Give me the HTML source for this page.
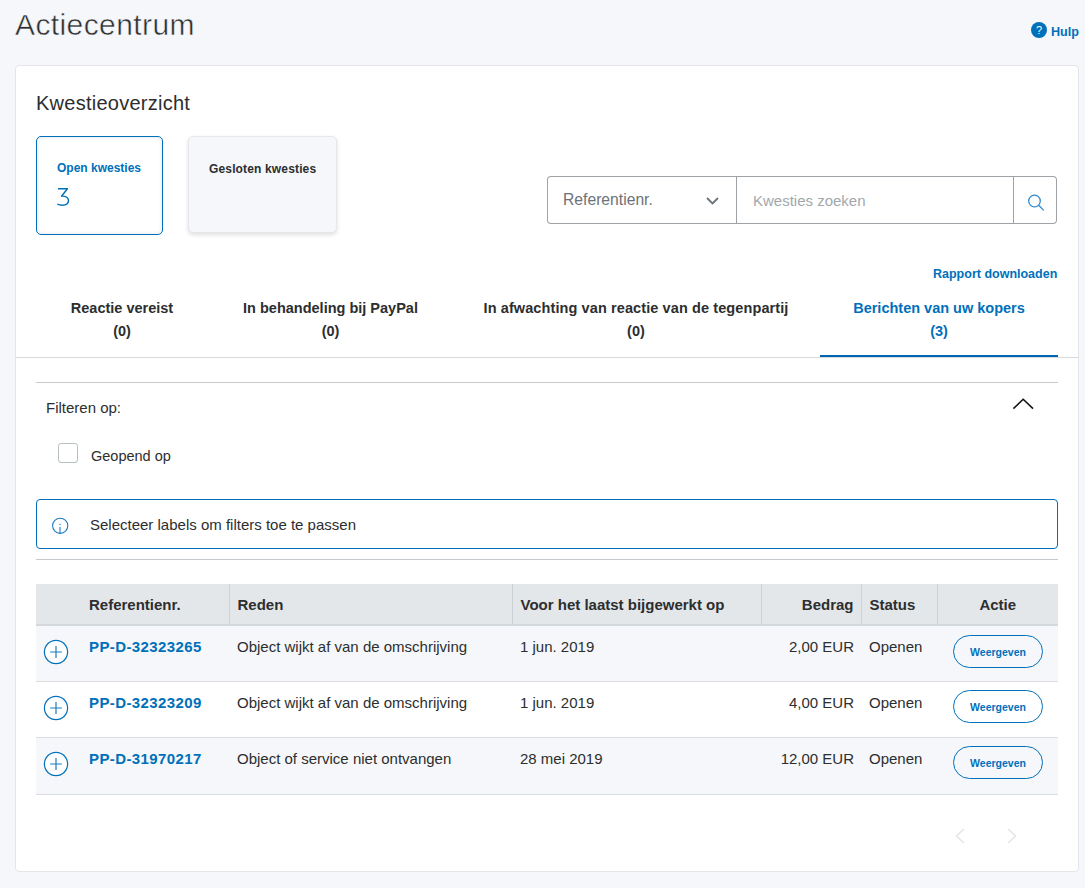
<!DOCTYPE html>
<html><head><meta charset="utf-8">
<style>
*{box-sizing:border-box;margin:0;padding:0}
html,body{width:1085px;height:888px;overflow:hidden}
body{background:#f5f7fa;font-family:"Liberation Sans",sans-serif;color:#2c2e2f;position:relative}
.abs{position:absolute;white-space:nowrap}
#title{left:15px;top:5px;font-size:30px;line-height:40px;color:#2c2e2f;font-weight:400;letter-spacing:0.4px;-webkit-text-stroke:0.5px #f5f7fa}
#hulp{left:1031px;top:22px;height:17px}
#hulp .q{position:absolute;left:0;top:0;width:16px;height:16px;border-radius:50%;background:#0070ba;color:#fff;font-size:11px;font-weight:400;text-align:center;line-height:16px}
#hulp .t{position:absolute;left:20px;top:1px;font-size:12.6px;font-weight:700;color:#0070ba;line-height:18px}
#card{left:15px;top:65px;width:1064px;height:807px;background:#fff;border:1px solid #e3e6e9;border-radius:4px}
#kw{left:36px;top:89.5px;font-size:20px;line-height:26px;letter-spacing:0.25px}
.box{position:absolute;border-radius:5px}
#open{left:36px;top:136px;width:127px;height:99px;border:1px solid #0070ba;background:#fff;box-shadow:inset 0 0 4px rgba(0,0,0,.12)}
#closed{left:188px;top:136px;width:149px;height:97px;background:#f5f7fa;border:1px solid #e4e8eb;box-shadow:0 2px 4px rgba(0,0,0,.13)}
.bt{font-size:12px;font-weight:700;line-height:16px}
#sel{left:547px;top:176px;width:190px;height:48px;border:1px solid #9da3a6;border-right:none;border-radius:4px 0 0 4px}
#inp{left:736px;top:176px;width:278px;height:48px;border:1px solid #9da3a6}
#sbtn{left:1013px;top:176px;width:44px;height:48px;border:1px solid #9da3a6;border-left:none;border-radius:0 4px 4px 0}
.tab{position:absolute;top:297px;text-align:center;font-size:14.5px;font-weight:700;line-height:23px;color:#2c2e2f}
#tabline{left:16px;top:357px;width:1062px;height:1px;background:#d6dadd}
#tabact{left:820px;top:355px;width:238px;height:2px;background:#0065b3}
.hr{position:absolute;height:1px;background:#c4cacd}
#info{left:36px;top:499px;width:1022px;height:50px;border:1px solid #0070ba;border-radius:4px}
table{position:absolute;left:36px;top:584px;width:1022px;border-collapse:collapse;font-size:15px}
th{background:#e3e7ea;height:41px;text-align:left;font-weight:700;padding:1px 8px 0;border-left:1px solid #cbd2d6;border-bottom:2px solid #d3d8dc}
td{height:56px;vertical-align:top;padding:12px 8px 0;border-left:none;border-bottom:1px solid #d9dde0}
tr.g td{background:#f5f7fa}
td.c0,th.c0{border-left:none}
a.ref{color:#0070ba;font-weight:700;text-decoration:none;letter-spacing:.4px}
.btn{display:block;margin-left:16px;width:90px;height:33px;border:1px solid #0070ba;border-radius:17px;color:#0070ba;font-size:10.5px;font-weight:700;text-align:center;line-height:32px}
</style></head><body>
<div id="title" class="abs">Actiecentrum</div>
<div id="hulp" class="abs"><span class="q">?</span><span class="t">Hulp</span></div>
<div id="card" class="abs"></div>
<div id="kw" class="abs">Kwestieoverzicht</div>
<div id="open" class="box"><div class="abs bt" style="left:20px;top:23px;color:#0070ba">Open kwesties</div></div>
<div id="closed" class="box"><div class="abs bt" style="left:20px;top:23.5px;color:#2c2e2f;letter-spacing:0.15px">Gesloten kwesties</div></div>
<div id="sel" class="abs"><span class="abs" style="left:15px;top:13px;font-size:15.7px;line-height:20px;color:#6c7378">Referentienr.</span></div>
<div id="inp" class="abs"><span class="abs" style="left:16px;top:14px;font-size:15px;line-height:20px;color:#a2a8ac">Kwesties zoeken</span></div>
<div id="sbtn" class="abs"></div>
<div class="abs" style="left:933px;top:266px;font-size:12.5px;font-weight:700;color:#0070ba;line-height:16px">Rapport downloaden</div>
<div class="tab" style="left:16px;width:212px">Reactie vereist<br>(0)</div>
<div class="tab" style="left:229px;width:203px">In behandeling bij PayPal<br>(0)</div>
<div class="tab" style="left:432px;width:408px;letter-spacing:0.1px">In afwachting van reactie van de tegenpartij<br>(0)</div>
<div class="tab" style="left:820px;width:238px;color:#0070ba">Berichten van uw kopers<br>(3)</div>
<div id="tabline" class="abs"></div>
<div id="tabact" class="abs"></div>
<div class="hr" style="left:36px;top:382px;width:1022px"></div>
<div class="abs" style="left:46px;top:398px;font-size:15px;line-height:20px">Filteren op:</div>
<div class="abs" style="left:58px;top:443px;width:20px;height:20px;border:1px solid #b7bec2;border-radius:3px"></div>
<div class="abs" style="left:91px;top:446px;font-size:14.5px;line-height:20px">Geopend op</div>
<div id="info" class="abs"><span class="abs" style="left:53px;top:14.5px;font-size:15px;line-height:20px">Selecteer labels om filters toe te passen</span></div>
<div class="hr" style="left:36px;top:559px;width:1022px"></div>
<table>
<tr><th class="c0" style="width:45px"></th><th style="width:148px;border-left:none">Referentienr.</th><th style="width:283px">Reden</th><th style="width:249px">Voor het laatst bijgewerkt op</th><th style="width:100px;text-align:right;padding-right:7px">Bedrag</th><th style="width:76px">Status</th><th style="text-align:center">Actie</th></tr>
<tr class="g"><td class="c0"></td><td style="border-left:none"><a class="ref">PP-D-32323265</a></td><td>Object wijkt af van de omschrijving</td><td>1 jun. 2019</td><td style="text-align:right;padding-right:7px">2,00 EUR</td><td>Openen</td><td style="padding:8.5px 0 0 0"><span class="btn">Weergeven</span></td></tr>
<tr><td class="c0"></td><td style="border-left:none"><a class="ref">PP-D-32323209</a></td><td>Object wijkt af van de omschrijving</td><td>1 jun. 2019</td><td style="text-align:right;padding-right:7px">4,00 EUR</td><td>Openen</td><td style="padding:8.5px 0 0 0"><span class="btn">Weergeven</span></td></tr>
<tr class="g"><td class="c0" style="height:57px"></td><td style="border-left:none"><a class="ref">PP-D-31970217</a></td><td>Object of service niet ontvangen</td><td>28 mei 2019</td><td style="text-align:right;padding-right:7px">12,00 EUR</td><td>Openen</td><td style="padding:8.5px 0 0 0"><span class="btn">Weergeven</span></td></tr>
</table>

<svg class="abs" style="left:0;top:0" width="1085" height="888" viewBox="0 0 1085 888">
<polyline points="707,198 712.5,203.5 718,198" fill="none" stroke="#6c7378" stroke-width="1.8"/>
<path d="M58 188.8H67.4L61.6 196.2C66 195.8 68.5 198 68.5 200.6C68.5 203.4 66 205.2 62.2 205.2C60 205.2 58.5 204.8 57.3 204" fill="none" stroke="#0070ba" stroke-width="1.45" stroke-linejoin="round"/>
<circle cx="1034.5" cy="201" r="5.8" fill="none" stroke="#2f89cf" stroke-width="1.3"/>
<line x1="1038.6" y1="205.2" x2="1043.8" y2="210.4" stroke="#2f89cf" stroke-width="1.3"/>
<polyline points="1013.4,408.6 1023.2,399.2 1033,408.6" fill="none" stroke="#111" stroke-width="1.5"/>
<circle cx="60.2" cy="525.8" r="7.6" fill="none" stroke="#1c7cc4" stroke-width="1.1"/>
<line x1="60" y1="527" x2="60" y2="534" stroke="#1c7cc4" stroke-width="1.1"/>
<circle cx="60" cy="524.5" r="0.7" fill="#1c7cc4"/>
<g fill="#fff" stroke="#0070ba" stroke-width="1.2">
<circle cx="56" cy="652" r="11.6"/><circle cx="56" cy="708" r="11.6"/><circle cx="56" cy="764" r="11.6"/>
</g>
<g stroke="#1c7cc4" stroke-width="1.2">
<path d="M50.1 652H61.9M56 646V658"/><path d="M50.1 708H61.9M56 702V714"/><path d="M50.1 764H61.9M56 758V770"/>
</g>
<polyline points="964,829 956.5,836 964,843" fill="none" stroke="#e3e6e9" stroke-width="1.6"/>
<polyline points="1008,829 1015.5,836 1008,843" fill="none" stroke="#e3e6e9" stroke-width="1.6"/>
</svg>
</body></html>
